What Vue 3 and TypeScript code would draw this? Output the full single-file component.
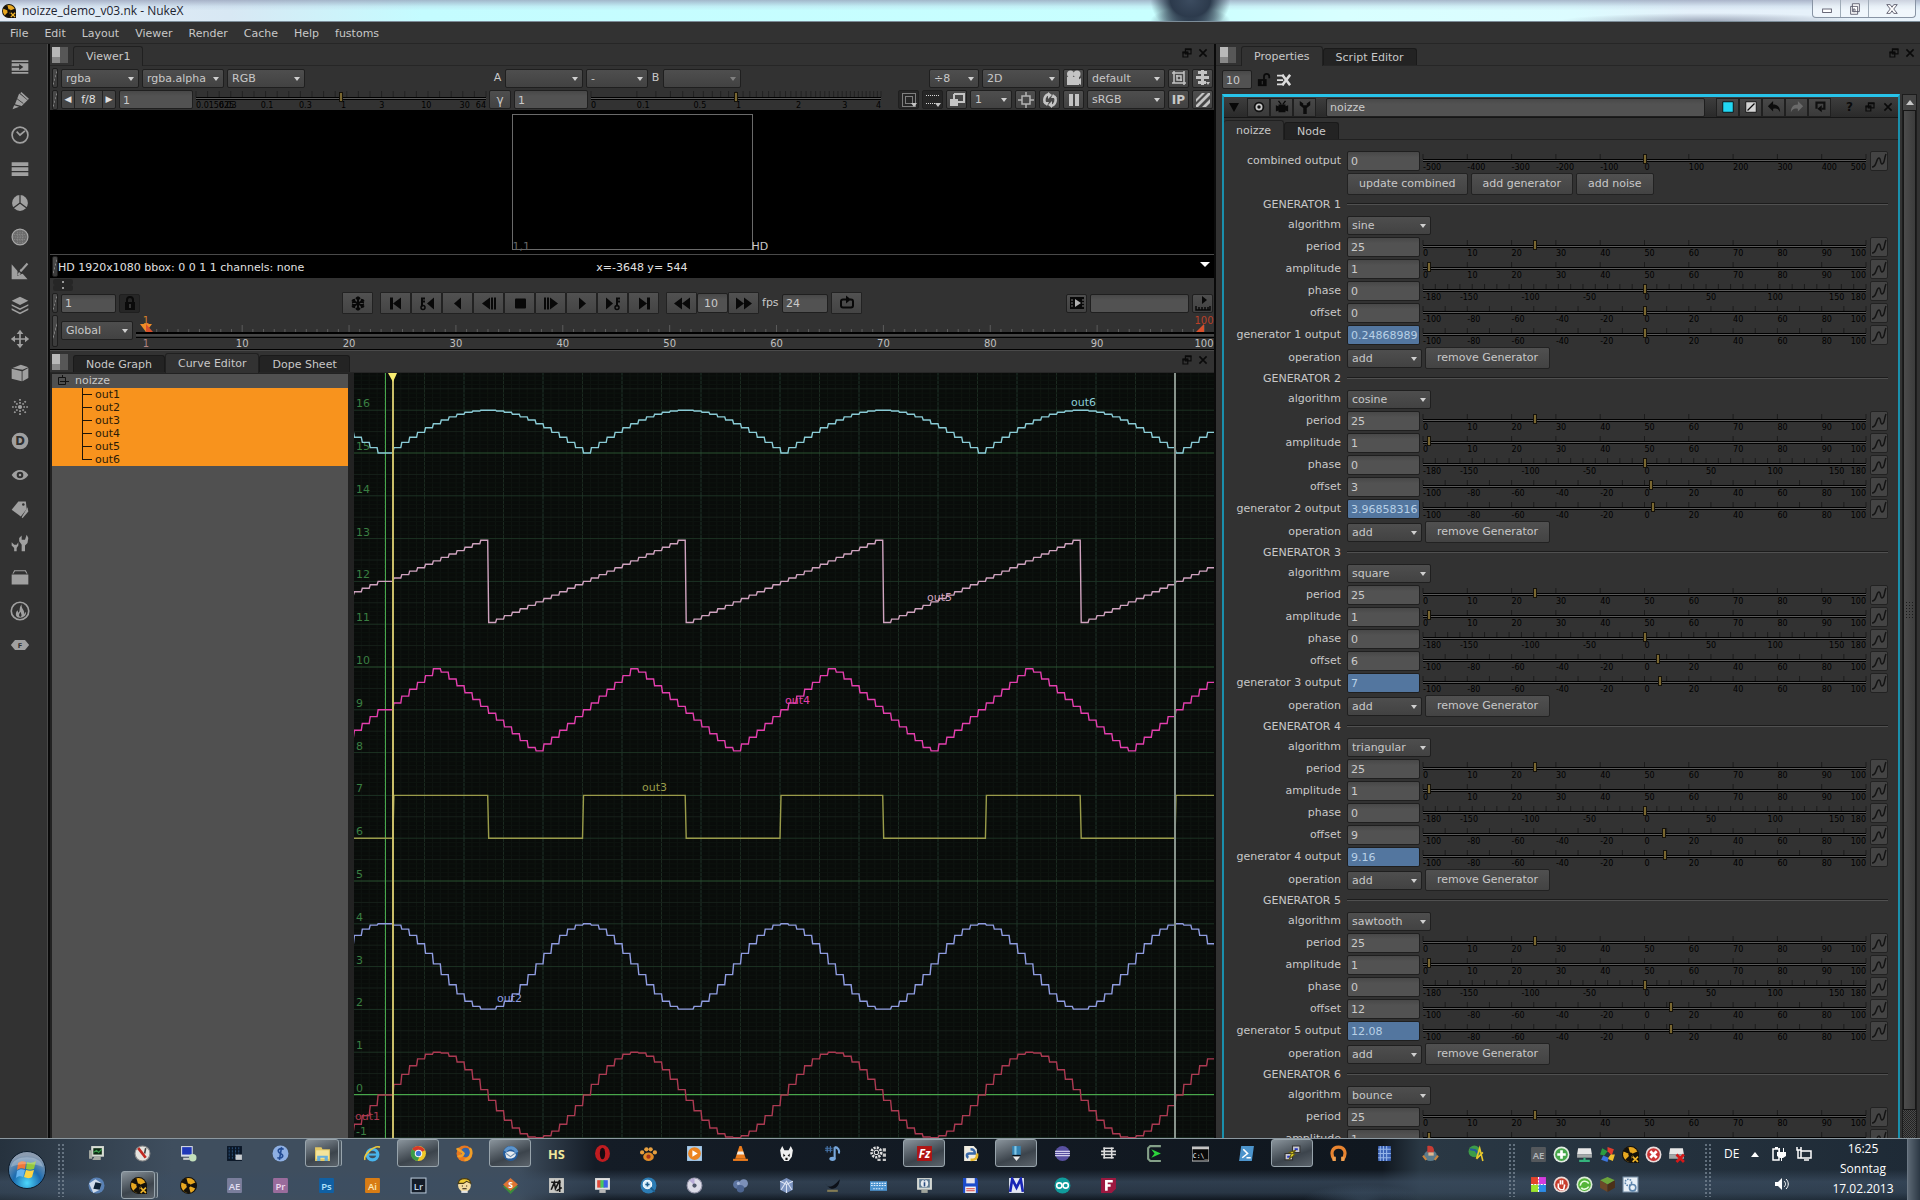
<script setup lang="ts">
interface Scale { min: number; max: number; labels: number[]; ticks: number[] }
interface Param { label: string; value: string; pos: number; scale: Scale; driven?: boolean }
interface Generator { id: number; algorithm: string; params: Param[]; open?: boolean }
interface Mark { at: number; text: string }
interface TaskItem { icon: string; state?: 'open' | 'stack' }

const range = (from: number, to: number, step: number): number[] => {
  const out: number[] = []
  for (let v = from; v <= to; v += step) out.push(v)
  return out
}

/* ---------- menus, tool strip ---------- */
const menus = ['File', 'Edit', 'Layout', 'Viewer', 'Render', 'Cache', 'Help', 'fustoms']

const toolIcons: Record<string, string> = {
  Image: '<path d="M2 4h20v2H2zM2 18h20v2H2zM2 7.500h20v9H2z"/><path d="M2 11h9V8.500l5 3.500-5 3.500V13H2z" fill="#303030"/>',
  Draw: '<path d="M11 3l10 8-7 7-8-2zM5 17l6 2-8 3z"/><path d="M13 2l9 8" stroke="#a0a0a0" stroke-width="2"/><path d="M8 9l8 6" stroke="#303030"/>',
  Time: '<circle cx="12" cy="12" r="9.500" fill="none" stroke="#a0a0a0" stroke-width="2"/><path d="M8 8l4 4 6-5" fill="none" stroke="#a0a0a0" stroke-width="2"/>',
  Channel: '<path d="M2 4h20v4.500H2zM2 10h20v4.500H2zM2 16h20v4.500H2z"/>',
  Color: '<circle cx="12" cy="12" r="9.500"/><path d="M12 12V2M12 12l-8 6M12 12l8 6" stroke="#303030" stroke-width="1.500"/>',
  Filter: '<circle cx="12" cy="12" r="9.500" fill="#6c6c6c" stroke="#a8a8a8" stroke-width="1.500"/><path d="M5 9h14M4 12h16M5 15h14M9 4v16M12 4v16M15 4v16" stroke="#8e8e8e" stroke-dasharray="1 1"/>',
  Keyer: '<path d="M2 4l7 8v6l6-3 6 7H2z"/><path d="M21 3l-8 9M14 10l-4 7" stroke="#a0a0a0" stroke-width="2.500"/><path d="M10 12l5 3" stroke="#303030" stroke-width="1.500"/>',
  Merge: '<path d="M12 2l10 5-10 5L2 7z"/><path d="M2 11l10 5 10-5v2l-10 5-10-5zM2 16l10 5 10-5v2l-10 5-10-5z"/>',
  Transform: '<path d="M12 1l4 5h-3v5h5V8l5 4-5 4v-3h-5v5h3l-4 5-4-5h3v-5H6v3l-5-4 5-4v3h5V6H8z"/>',
  '3D': '<path d="M13 2l9 3-7 3-12-2zM2 7l12 3v12L2 19zM15 10l7-4v12l-7 4z"/>',
  Particles: '<circle cx="12" cy="12" r="2.500"/><g stroke="#a0a0a0" stroke-width="2" stroke-dasharray="2 1.500"><path d="M12 8V2M12 16v6M8 12H2M16 12h6M9 9L5 5M15 15l4 4M15 9l4-4M9 15l-4 4"/></g>',
  Deep: '<circle cx="12" cy="12" r="10"/><text x="12" y="17" text-anchor="middle" font-family="DejaVu Sans, sans-serif" font-weight="700" font-size="14" fill="#303030">D</text>',
  Views: '<path d="M2 12c5-8 15-8 20 0-5 8-15 8-20 0z"/><circle cx="12" cy="12" r="4" fill="#303030"/><circle cx="12" cy="12" r="1.500"/>',
  MetaData: '<path d="M10 3h9l1 9-7 9-11-8z"/><path d="M21 10l1 5-7 8-1-1z"/><circle cx="16" cy="6.500" r="1.500" fill="#303030"/>',
  ToolSets: '<path d="M14 22v-8l-3-4V6l3-3v5h4l2-6 2 4-1 6-3 3v7zM5 22v-4l-3-3v-4l3 3h3l2-3v4l-2 3v4z"/>',
  Other: '<path d="M2 9h20v12H2zM5 4h14l2 4h-1l-2-3H6L4 8H3z"/>',
  FurnaceCore: '<circle cx="12" cy="12" r="10.500" fill="none" stroke="#a0a0a0" stroke-width="2"/><path d="M12 20c-6 0-6-6-3-9l1 3c3-2 0-5 4-10-1 5 4 7 3 12l2-3c1 4-2 7-7 7z"/><path d="M12 19c-2-1-1-4 1-6 0 3 2 4 0 6z" fill="#303030"/>',
  Furnace: '<path d="M6 6h12l5 6-5 6H6l-5-6z"/><text x="12" y="15" text-anchor="middle" font-family="DejaVu Sans, sans-serif" font-weight="700" font-size="8" fill="#303030">F</text>',
}

/* ---------- viewer ---------- */
const ui: Record<string, string> = {
  camera: '<circle cx="4.500" cy="4" r="3.500"/><circle cx="11" cy="4" r="3.500"/><path d="M1 7h12v8H1zM12 10l3-2v7l-3-2z"/>',
  crop: '<path d="M3 1v12h12M1 3h12v12M6 5v5h5M5 6h5v5M1 13h3M13 1v3" fill="none" stroke="#c4c4c4" stroke-width="1.500"/>',
  layout: '<path d="M3 1h9v3H3zM1 6h13v3H1zM3 11h8v3H3zM11 12h4l-2 3zM6 0h3v15H6z"/>',
  roi: '<path d="M1.500 1.500h13v13h-13zM4.500 4.500h7v7h-7z" fill="none" stroke="#d8d8d8" stroke-dasharray="1 1"/><path d="M10 11h6l-3 4z"/>',
  proxy: '<path d="M1 3.500h13M1 11.500h10" fill="none" stroke="#d8d8d8" stroke-dasharray="1 1"/><path d="M10 11h6l-3 4z"/>',
  compare: '<path d="M5 2h10v8H9M5 2v5" fill="none" stroke="#c4c4c4" stroke-width="2"/><path d="M1 7h8v7H1z"/>',
  target: '<path d="M4 4h8v8H4zM8 0v4M8 12v4M0 8h4M12 8h4" fill="none" stroke="#b4b4b4" stroke-width="1.500"/>',
  refresh: '<path d="M7 2a6 6 0 0 0-3 10M9 14a6 6 0 0 0 3-10" fill="none" stroke="#c4c4c4" stroke-width="2.500"/><path d="M6 0l4 3-4 4zM10 9v7l-4-3zM1 10l6 0-2 4zM9 6h6l-4-4z"/>',
  pause: '<path d="M3 2h4v12H3zM9 2h4v12H9z"/>',
  stripes: '<path d="M1 7l6-6h3L1 10zM1 13L13 1h2v2L3 15H1zM7 15l8-8v4l-4 4z"/>',
  popout: '<path d="M5.500 2.500h7v6h-7zM2.500 6.500h6v6h-6z" fill="#333" stroke="#0a0a0a" stroke-width="1.500"/><path d="M5 3h8M2 7h7" stroke="#0a0a0a" stroke-width="2"/>',
  close: '<path d="M3 3l9 9M12 3l-9 9" stroke="#0a0a0a" stroke-width="2"/>',
  lock: '<path d="M5 7V5a3 3 0 0 1 6 0v2" fill="none" stroke="#0a0a0a" stroke-width="2"/><path d="M3 7h10v8H3z" fill="#0a0a0a"/><path d="M8 9v4" stroke="#444" stroke-width="1.500"/>',
  unlock: '<path d="M8 7V4a3 3 0 0 1 6 0v2" fill="none" stroke="#0a0a0a" stroke-width="2"/><path d="M1 7h10v8H1z" fill="#0a0a0a"/><path d="M6 9v4" stroke="#444"/>',
  clear: '<path d="M0 2h8v2H0zM0 7h7v2H0zM0 12h8v2H0z"/><path d="M6 2l9 12M15 2L6 14" stroke="#dcdcdc" stroke-width="3"/>',
  snow: '<g fill="none" stroke="#080808" stroke-width="2"><path d="M8 1v14M2 4.500l12 7M14 4.500l-12 7M6 2l2 2 2-2M6 14l2-2 2 2M2 7l2.500-1L4 3.500M14 9l-2.500 1 .5 2.500M14 7l-2.500-1 .5-2.500M2 9l2.500 1-.5 2.500"/></g>',
  first: '<path d="M2 2h3v12H2zM13 2v12L5 8z"/>',
  prevkey: '<path d="M15 2v12L8 8z"/><path d="M3 2v9M3 3h3M3 6h3" stroke="#080808" stroke-width="2"/><circle cx="4" cy="12" r="2" fill="none" stroke="#080808" stroke-width="1.500"/>',
  back: '<path d="M11 2v12L4 8z"/>',
  stepback: '<path d="M9 2v12L1 8zM10 2h2v12h-2zM13 2h2v12h-2z"/>',
  stop: '<rect x="3" y="3" width="11" height="10" rx="1"/>',
  stepfwd: '<path d="M7 2v12l8-6zM4 2h2v12H4zM1 2h2v12H1z"/>',
  play: '<path d="M5 2v12l7-6z"/>',
  nextkey: '<path d="M1 2v12l7-6z"/><path d="M12 2v9M12 3h3M12 6h3" stroke="#080808" stroke-width="2"/><circle cx="12" cy="12" r="2" fill="none" stroke="#080808" stroke-width="1.500"/>',
  last: '<path d="M11 2h3v12h-3zM3 2v12l8-6z"/>',
  rew: '<path d="M8 2v12L0 8zM16 2v12L8 8z"/>',
  ffw: '<path d="M0 2v12l8-6zM8 2v12l8-6z"/>',
  loop: '<path d="M7 4H4a2 2 0 0 0-2 2v4a2 2 0 0 0 2 2h8a2 2 0 0 0 2-2V6a2 2 0 0 0-2-2h-1" fill="none" stroke="#080808" stroke-width="2"/><path d="M7 0v8l5-4z"/>',
  flip: '<path d="M1 2h14v12H1z"/><path d="M6 4v8l6-4z" fill="#b0b0b0"/><path d="M3 4v8M14 4v8" stroke="#777" stroke-dasharray="2 1"/>',
  render: '<path d="M7 1v8l5-4z"/><path d="M1 11v4h14v-4M4 12v3M7 12v3M10 12v3M13 12v3" fill="none" stroke="#080808" stroke-width="1.500"/>',
  eye: '<circle cx="8" cy="8" r="6" fill="#111"/><circle cx="8" cy="8" r="4" fill="#c8c8c8"/><circle cx="8" cy="8" r="2" fill="#111"/>',
  node: '<path d="M1 6l3 1V5h8v2l3-1v7l-3-1v2H4v-2l-3 1z" fill="#0a0a0a"/><path d="M4 1l3 4M12 1L9 5" stroke="#0a0a0a" stroke-width="1.500"/>',
  wrench: '<path d="M6 16V9L2 6V1l4 3v2h4V4l4-3v5l-4 3v7z"/>',
  cyan: '<path d="M2 2h12v12H2z" fill="#22d8f4" stroke="#0a0a0a"/>',
  glcol: '<path d="M2 2h12v12H2z" fill="#d4d4d4" stroke="#0a0a0a"/><path d="M4 12l8-8" stroke="#0a0a0a" stroke-width="1.500"/>',
  undo: '<path d="M1 7l6-6v4c6 0 8 4 8 9-2-4-4-5-8-4v3z"/>',
  redo: '<path d="M15 7L9 1v4c-6 0-8 4-8 9 2-4 4-5 8-4v3z" fill="#6a6a6a"/>',
  revert: '<path d="M4 10V3h9v7h-3" fill="none" stroke="#101010" stroke-width="2.500"/><path d="M10 6v8l-5-4z"/>',
  curve: '<path d="M1 14c5 0 4-9 7-9 2 0 1 6 3 6 3 0 2-6 4-10" fill="none" stroke="#141414" stroke-width="1.500"/>',
}

const play = ['first', 'prevkey', 'back', 'stepback', 'stop', 'stepfwd', 'play', 'nextkey', 'last']

const gainMarks: Mark[] = [0.015625, 0.03, 0.1, 0.3, 1, 3, 10, 30, 64]
  .map(v => ({ at: (Math.log2(v) + 6) / 12 * 100, text: String(v) }))
const gainTicks = range(0, 100, 4)
const gammaMarks: Mark[] = [0, 0.1, 0.5, 1, 2, 3, 4].map(v => ({ at: Math.sqrt(v / 4) * 100, text: String(v) }))
const gammaTicks = range(0, 40, 1).map(v => Math.sqrt(v / 40) * 100)

const frameAt = (f: number): string => ((f - 1) / 99 * 100).toFixed(3) + '%'
const frames = range(1, 100, 1)
const frameLabels = [1, ...range(10, 100, 10)]

/* ---------- curve editor ---------- */
const FRAME = 7.9
const UNIT = 42.8
const px = (f: number): number => 31 + f * FRAME
const py = (v: number): number => 722 - v * UNIT

const stepped = (fn: (t: number) => number): string => {
  let d = ''
  for (let f = -5; f < 130; f++) {
    const t = f < 0 ? f + 1 : f
    const y = py(fn(t)).toFixed(1)
    const x = px(f)
    d += `${d ? 'L' : 'M'}${(x + 1).toFixed(1)} ${y}L${px(f + 1).toFixed(1)} ${y}`
  }
  return d
}
const squareHigh = (t: number): boolean =>
  (t >= 1 && t < 13) || (t >= 25 && t < 38) || (t >= 50 && t < 63) || (t >= 76 && t < 88) || t >= 100
const curves = [
  { name: 'out1', color: '#ac3a52', x: 1, y: 747, d: stepped(t => Math.sin(2 * Math.PI * t / 25)) },
  { name: 'out2', color: '#8f9ce0', x: 143, y: 629, d: stepped(t => 3 + Math.cos(2 * Math.PI * t / 25)) },
  { name: 'out3', color: '#9a9c4a', x: 288, y: 418, d: stepped(t => (squareHigh(t) ? 7 : 6)) },
  { name: 'out4', color: '#e43fae', x: 431, y: 331, d: stepped(t => 9 + Math.asin(Math.sin(2 * Math.PI * t / 25)) * 2 / Math.PI) },
  { name: 'out5', color: '#cfa3bf', x: 573, y: 228, d: stepped(t => 12 + 2 * (t / 25 - Math.floor(0.5 + t / 25))) },
  { name: 'out6', color: '#8accd6', x: 717, y: 33, d: stepped(t => 15 + Math.abs(Math.sin(Math.PI * t / 25))) },
]
const gridX = range(-3, 130, 1).map(f => ({ x: px(f), c: f % 10 === 0 ? '#21352a' : f % 5 === 0 ? '#1b2a20' : '#101511' }))
const gridY = range(-10, 170, 1).map(k => ({
  y: py(k / 10),
  c: k % 50 === 0 ? '#2a5230' : k % 10 === 0 ? '#1d3324' : k % 5 === 0 ? '#17211a' : '#0d130f',
}))
const gridLabels = range(-1, 16, 1)

/* ---------- properties ---------- */
const pct: Scale = { min: 0, max: 100, labels: range(0, 100, 10), ticks: range(0, 100, 10) }
const hundred: Scale = { min: -100, max: 100, labels: range(-100, 100, 20), ticks: range(-100, 100, 10) }
const degrees: Scale = { min: -180, max: 180, labels: [-180, -150, -100, -50, 0, 50, 100, 150, 180], ticks: range(-180, 180, 10) }
const wide: Scale = { min: -500, max: 500, labels: range(-500, 500, 100), ticks: range(-500, 500, 100) }
const place = (s: Scale, v: number): string => ((v - s.min) / (s.max - s.min) * 100).toFixed(2) + '%'

const combined: Param = { label: 'combined output', value: '0', pos: 0, scale: wide }
const leading = (offset: number): Param[] => [
  { label: 'period', value: '25', pos: 25, scale: pct },
  { label: 'amplitude', value: '1', pos: 1, scale: pct },
  { label: 'phase', value: '0', pos: 0, scale: degrees },
  { label: 'offset', value: String(offset), pos: offset, scale: hundred },
]
const make = (id: number, algorithm: string, output: string): Generator => ({
  id,
  algorithm,
  params: [
    ...leading((id - 1) * 3),
    { label: `generator ${id} output`, value: output, pos: Number(output), scale: hundred, driven: true },
  ],
})
const generators: Generator[] = [
  make(1, 'sine', '0.24868989'),
  make(2, 'cosine', '3.96858316'),
  make(3, 'square', '7'),
  make(4, 'triangular', '9.16'),
  make(5, 'sawtooth', '12.08'),
  { id: 6, algorithm: 'bounce', params: leading(15).slice(0, 2), open: true },
]

/* ---------- task bar ---------- */
const tile = (bg: string, fg: string, t: string): string =>
  `<rect x="1" y="1" width="14" height="14" rx="1" fill="${bg}"/><text x="8" y="12" text-anchor="middle" font-family="Open Sans, sans-serif" font-weight="600" font-size="9" fill="${fg}">${t}</text>`
const nuke = '<circle cx="8" cy="8" r="8" fill="#15110a"/><circle cx="8" cy="8" r="7" fill="#e8a820"/><path d="M8 8L1 5a7 7 0 0 1 5-4zM8 8l7-3a7 7 0 0 1 0 6zM8 8l2 7a7 7 0 0 1-7-2z" fill="#15110a"/><circle cx="8" cy="8" r="2" fill="#15110a"/>'
const app: Record<string, string> = {
  nuke,
  nukex: nuke + '<path d="M9 9h7v7H9z" fill="#15110a"/><path d="M10 10l5 5M15 10l-5 5" stroke="#f0b428" stroke-width="1.500"/>',
  monitor: '<path d="M3 1h12v10H3z" fill="#d8dcd4"/><path d="M5 3h8v6H5z" fill="#0d2c14"/><path d="M5 7l3-2 2 2 3-3" stroke="#3c9a4c" fill="none"/><path d="M1 5h3v8H1zM6 11h6v3H4z" fill="#a8aca4"/>',
  gauge: '<circle cx="8" cy="8" r="7" fill="#e4e4e0" stroke="#8c8c8c"/><path d="M4 3l7 9" stroke="#c02820" stroke-width="2.500"/><path d="M11 3l-1 5" stroke="#444" stroke-width="1.500"/>',
  remote: '<path d="M1 1h11v10H1z" fill="#d8dce8"/><path d="M2 2h9v7H2z" fill="#2038b8"/><path d="M3 12h6v2H3z" fill="#ccc"/><circle cx="12" cy="12" r="3.500" fill="#c4e0bc"/>',
  matrix: '<path d="M1 1h14v14H1z" fill="#0a1626"/><path d="M3 2v12M6 2v12M9 2v12M12 2v12" stroke="#284c74" stroke-dasharray="2 1"/><path d="M9 9h6v5H9z" fill="#c8ccd0"/>',
  swirl: '<circle cx="8" cy="8" r="7.500" fill="#8eb0e4"/><path d="M11 4c-5-2-7 2-3 4s2 5-3 4M9 2l-2 12" fill="none" stroke="#234c94" stroke-width="1.500"/>',
  folder: '<path d="M1 2h6l1 2h7v11H1z" fill="#e4c864"/><path d="M2 5h12v8H2z" fill="#f4e49c"/><path d="M3 10h10v5h-3v-3H6v3H3z" fill="#68b0dc"/>',
  ie: '<circle cx="8" cy="9" r="5" fill="none" stroke="#48b4ec" stroke-width="3"/><path d="M4 9h9" stroke="#48b4ec" stroke-width="2"/><path d="M1 14C-1 10 9 0 15 2" fill="none" stroke="#f0c838" stroke-width="1.500"/>',
  chrome: '<circle cx="8" cy="8" r="7" fill="#f0c828"/><path d="M8 8L2 4a7 7 0 0 1 12 1z" fill="#d83828"/><path d="M2 4a7 7 0 0 0 5 11l3-6z" fill="#3c9c48"/><circle cx="8" cy="8" r="3.500" fill="#f4f4f4"/><circle cx="8" cy="8" r="2.500" fill="#3c78d8"/>',
  firefox: '<circle cx="8" cy="8" r="7.500" fill="#e87820"/><circle cx="9" cy="7" r="4.500" fill="#3464a8"/><path d="M1 3c1 2 4 2 6 5-1 3-4 3-5 2M13 3c3 4 0 11-5 11" fill="none" stroke="#f0a028" stroke-width="2.500"/>',
  bird: '<circle cx="8" cy="8" r="7" fill="#245c9c"/><path d="M3 8c2-3 9-3 10 1 0 3-5 5-9 3z" fill="#e8ecf0"/><path d="M3 6c3-5 9-4 11 1" fill="none" stroke="#5c94cc" stroke-width="3"/><path d="M4 8l4 3 4-3" fill="none" stroke="#6c8cac"/>',
  hs: '<text x="8" y="13" text-anchor="middle" font-family="Open Sans, sans-serif" font-weight="700" font-size="12" fill="#f0e89c">HS</text>',
  opera: '<ellipse cx="8" cy="8" rx="7" ry="8" fill="#c01c20"/><ellipse cx="8" cy="8" rx="2.500" ry="5.500" fill="#180a10"/>',
  paw: '<ellipse cx="8" cy="11" rx="5" ry="4" fill="#e08c28"/><circle cx="2" cy="7" r="2" fill="#e8a040"/><circle cx="6" cy="4" r="2" fill="#e8a040"/><circle cx="10" cy="4" r="2" fill="#e8a040"/><circle cx="14" cy="7" r="2" fill="#e8a040"/><circle cx="8" cy="11" r="2" fill="#a83418"/>',
  wmp: '<path d="M1 1h14v14H1z" fill="#a8ccec"/><circle cx="8" cy="8" r="6" fill="#ec8420"/><path d="M6 5v6l5-3z" fill="#fff"/>',
  vlc: '<path d="M7 1h2l4 12H3z" fill="#ec7c1c"/><path d="M5.500 6h5l1 3h-7z" fill="#f0ece4"/><path d="M1 13h14v2H1z" fill="#ec7c1c"/>',
  foobar: '<path d="M4 1l2 4h4l2-4 2 4-1 6-3 4H6l-3-4-1-6z" fill="#f0f0f0"/><path d="M5 8l2 2-2 1zM11 8l-2 2 2 1zM7 12h2v2H7z" fill="#111"/>',
  csharp: '<path d="M10 2v11" stroke="#78a8dc" stroke-width="2"/><path d="M10 2c3 0 5 3 4 6" fill="none" stroke="#78a8dc" stroke-width="2"/><ellipse cx="8" cy="13" rx="3" ry="2" fill="#78a8dc"/><path d="M3 1v6M6 1v6M1 3h7M1 5h7" stroke="#4878b0"/>',
  gears: '<circle cx="6" cy="7" r="4.500" fill="none" stroke="#e0e0e0" stroke-width="2.500" stroke-dasharray="2 1"/><circle cx="6" cy="7" r="2" fill="none" stroke="#e0e0e0"/><path d="M12 3h3v3h-3zM12 8h3v3h-3zM12 13h3v2h-3zM7 13h3v2H7z" fill="#c8c8c8"/>',
  fz: '<path d="M1 1h14v14H1z" fill="#b01414"/><text x="8" y="12" text-anchor="middle" font-family="Open Sans, sans-serif" font-weight="700" font-style="italic" font-size="11" fill="#fff">Fz</text>',
  idle: '<path d="M2 1h9l3 3v11H2z" fill="#f0ece0"/><path d="M8 4c4 0 4 2 4 4H7c-3 0-3 3-1 4" fill="none" stroke="#3868a8" stroke-width="2.500"/><path d="M14 8c1 5-2 6-6 6" fill="none" stroke="#e8b82c" stroke-width="2.500"/>',
  pen: '<path d="M4 1h8v9H4z" fill="#3484b4"/><path d="M6 1h2v9H6z" fill="#84c8e8"/><path d="M4 10h8l-4 5z" fill="#e8e8e8"/><path d="M4 10h8" stroke="#081018" stroke-width="1.500"/>',
  eclipse: '<circle cx="8" cy="8" r="7" fill="#5850a0"/><path d="M1 6h14M1 8h14M1 10h14" stroke="#d0ccec"/>',
  lines: '<path d="M3 3h10M1 6h14M1 9h14M3 12h10M4 2v11M11 2v11" stroke="#dcdcdc" stroke-width="1.500"/>',
  cygwin: '<path d="M14 1H4L2 3v10l2 2h10" fill="none" stroke="#84a088" stroke-width="2"/><path d="M5 4l9 4-9 4 3-4z" fill="#2cd43c"/>',
  cmd: '<path d="M0 2h16v13H0z" fill="#080808" stroke="#c8c8c8"/><path d="M0 2h16v2H0z" fill="#c8c8c8"/><text x="8" y="12" text-anchor="middle" font-family="DejaVu Sans Mono, monospace" font-size="6" fill="#fff">C:\\_</text>',
  ps1: '<path d="M3 1h12l-2 14H1z" fill="#4c94cc"/><path d="M5 4l4 4-5 4M8 12h4" fill="none" stroke="#fff" stroke-width="1.500"/>',
  putty: '<path d="M8 1h7v6H8zM1 8h7v6H1z" fill="#c8c8d0" stroke="#333"/><path d="M10 3h3v2h-3zM3 10h3v2H3z" fill="#2838c0"/><path d="M11 5l-3 3 2 1-5 4 2-5-2-1z" fill="#f0e42c" stroke="#665c10"/>',
  headset: '<path d="M4 14C0 8 2 2 8 2s8 6 4 12" fill="none" stroke="#e88430" stroke-width="3"/><path d="M4 15v-4M12 15v-4" stroke="#f0a050" stroke-width="3"/>',
  bluegrid: '<path d="M2 1h12v14H2z" fill="#3c64b8"/><path d="M4 1v14M7 1v14M10 1v14M2 4h12M2 8h12M2 12h12" stroke="#94b4e8"/>',
  knight: '<ellipse cx="8" cy="10" rx="6" ry="5" fill="#5c7c8c"/><path d="M5 1c5-1 7 2 6 6H5z" fill="#c83c34"/><path d="M6 7h5v3H6z" fill="#e0b890"/><path d="M1 10l3 4M15 10l-3 4" stroke="#c8843c" stroke-width="2"/>',
  globe: '<circle cx="6" cy="6" r="5.500" fill="#3c9c48"/><path d="M2 4l5 1 3 4" stroke="#245c9c" stroke-width="2" fill="none"/><path d="M8 13l3-10 3 12M14 7l-6 6" stroke="#e8c82c" fill="none" stroke-width="1.500"/>',
  steam: '<circle cx="8" cy="8" r="7.500" fill="#5880b4"/><path d="M1 6l6-4 6 4-2 6-6 3z" fill="#d0dcec"/><path d="M7 5l6 1-2 6-6-1z" fill="#102438"/>',
  ae: tile('#7a7e9c', '#e0dcf0', 'AE'),
  pr: tile('#9a6c9c', '#f0dcf0', 'Pr'),
  ps: tile('#1060a4', '#b4e4fc', 'Ps'),
  ai: tile('#d87c14', '#fce8b4', 'Ai'),
  lr: '<rect x="1" y="1" width="14" height="14" fill="#141c28" stroke="#b4c4d4"/><text x="8" y="12" text-anchor="middle" font-family="Open Sans, sans-serif" font-weight="600" font-size="9" fill="#c0d8ec">Lr</text>',
  boy: '<circle cx="8" cy="8" r="6" fill="#f4dca0"/><path d="M2 6c1-6 11-6 12 0l-4-2-3 2z" fill="#f0cc34" stroke="#4c3c14"/><path d="M6 8v1M10 8v1M6 11h4" stroke="#221a0a"/><path d="M5 13h6v2H5z" fill="#e4e4e4"/>',
  sublime: '<path d="M8 3l7 6-7 7-7-7z" fill="#3c8c3c"/><path d="M8 1l7 6-7 6-7-6z" fill="#dc7434"/><text x="8" y="10" text-anchor="middle" font-family="Open Sans, sans-serif" font-weight="700" font-size="8" fill="#fff">S</text>',
  scribble: '<path d="M1 1h14v14H1z" fill="#c8c8c4"/><path d="M3 12l3-7 1 6 4-8v11M3 5h9M8 13l5-3" fill="none" stroke="#181818" stroke-width="1.500"/>',
  rgbmon: '<path d="M1 1h14v11H1z" fill="#e0e0e0"/><path d="M3 3h4v7H3z" fill="#e04c3c"/><path d="M6 3h4v7H6z" fill="#48c85c"/><path d="M9 3h4v7H9z" fill="#3c64e4"/><path d="M5 12h6v3H5z" fill="#b8b8b8"/>',
  zoom: '<circle cx="8" cy="8" r="7.500" fill="#2c7cb4"/><circle cx="7" cy="7" r="4" fill="#d8f0fc" stroke="#fff"/><path d="M5 7h4M7 5v4M10 10l4 4" stroke="#1c5c8c" stroke-width="1.500"/>',
  disc: '<circle cx="8" cy="8" r="7" fill="#dcdce8" stroke="#9898ac"/><path d="M8 8L3 3l5-2z" fill="#b8acd8"/><circle cx="8" cy="8" r="2" fill="#50586c"/>',
  blob: '<circle cx="5" cy="7" r="4" fill="#5c74a0"/><circle cx="11" cy="6" r="4" fill="#7c90b8"/><circle cx="8" cy="11" r="3.500" fill="#4c6490"/><circle cx="6" cy="6" r="1.500" fill="#a8b8d8"/>',
  vbox: '<path d="M8 1l6 3v8l-6 3-6-3V4z" fill="#7c94c0"/><path d="M2 4l6 3 6-3M8 7v8M3 12l5-8 5 8" fill="none" stroke="#dce4f4"/>',
  swallow: '<path d="M1 6c3 4 6 5 14-4-1 7-4 9-8 9-3-1-4-3-6-5z" fill="#0c1018"/><path d="M3 13h10" stroke="#847c54" stroke-width="2"/>',
  keyboard: '<path d="M0 4h16v9H0z" fill="#4c94d0"/><path d="M1 6h14M1 8h14M3 11h10" stroke="#e4f0fc" stroke-dasharray="1.500 1"/>',
  info: '<path d="M1 1h14v11H1z" fill="#d4d8d4"/><path d="M3 2h10v8H3z" fill="#5c7890"/><circle cx="8" cy="6" r="3.500" fill="#e8ecf0"/><path d="M8 3v1M8 5v4" stroke="#284c80" stroke-width="1.500"/><path d="M5 12h6v3H5z" fill="#a0a49c"/>',
  floppy: '<path d="M1 1h13l1 2v12H1z" fill="#1c4ccc"/><path d="M4 1h8v5H4z" fill="#e4e4ec"/><path d="M3 9h10v6H3z" fill="#f4f4f4"/><path d="M4 11h8M4 13h8" stroke="#d83c3c"/>',
  m: '<path d="M1 1h14v14H1z" fill="#e4e8f4"/><path d="M2 14L4 2l4 8 4-8 2 12" fill="none" stroke="#1824b4" stroke-width="2.500"/>',
  arduino: '<circle cx="8" cy="8" r="7.500" fill="#109c9c"/><circle cx="5" cy="8" r="2.500" fill="none" stroke="#fff" stroke-width="1.500"/><circle cx="11" cy="8" r="2.500" fill="none" stroke="#fff" stroke-width="1.500"/>',
  f: '<path d="M1 1h14v10l-4 4H1z" fill="#9c1840"/><path d="M6 13V4h6M6 8h4" fill="none" stroke="#fff" stroke-width="2.500"/>',
  aegrey: tile('#54585c', '#b4b8bc', 'AE'),
  plus: '<circle cx="8" cy="8" r="7.500" fill="#e4ece4"/><circle cx="8" cy="8" r="6" fill="#48a84c"/><path d="M8 4v8M4 8h8" stroke="#fff" stroke-width="2.500"/>',
  drive: '<path d="M2 2h12l1 6H1z" fill="#e8e8e8"/><path d="M1 8h14v3H1z" fill="#a4a8a8"/><path d="M8 11v3M3 14h10" stroke="#34b47c" stroke-width="2"/>',
  pinwheel: '<path d="M1 8l2-6 5 3-3 4z" fill="#2c9c40"/><path d="M8 1l6 2-2 6-4-4z" fill="#e03c2c"/><path d="M15 8l-2 6-5-2 3-4z" fill="#f0c02c"/><path d="M8 15l-6-2 2-4 5 2z" fill="#3c74dc"/>',
  cross: '<circle cx="8" cy="8" r="7.500" fill="#e8dcdc"/><circle cx="8" cy="8" r="6" fill="#cc3434"/><path d="M5 5l6 6M11 5l-6 6" stroke="#fff" stroke-width="2.500"/>',
  driveoff: '<path d="M2 2h12l1 6H1z" fill="#e8e8e8"/><path d="M1 8h14v4H1z" fill="#a4a8a8"/><path d="M8 8l7 7M15 8l-7 7" stroke="#d41818" stroke-width="2.500"/>',
  spectrum: '<path d="M1 1h7v7H1z" fill="#e4442c"/><path d="M8 1h7v7H8z" fill="#d43ce0"/><path d="M1 8h7v7H1z" fill="#9ce42c"/><path d="M8 8h7v7H8z" fill="#2c8ce8"/><path d="M8 1v14M1 8h14" stroke="#fff" stroke-dasharray="2 1"/>',
  hand: '<circle cx="8" cy="8" r="7.500" fill="#ecdcd8"/><circle cx="8" cy="8" r="6" fill="#c83c2c"/><path d="M5 7v4l2 2h3l1-5M7 4v4M9 4v4" fill="none" stroke="#fff" stroke-width="1.500"/>',
  green: '<circle cx="8" cy="8" r="7.500" fill="#dcecd8"/><circle cx="8" cy="8" r="6" fill="#54b438"/><path d="M4 9c1-5 6-5 8-2M12 10c-2 3-6 3-7 1" fill="none" stroke="#e8fce0" stroke-width="1.500"/>',
  block: '<path d="M8 1l7 3-7 4-7-4z" fill="#6ca43c"/><path d="M1 4l7 4v7l-7-4z" fill="#6c4828"/><path d="M15 4L8 8v7l7-4z" fill="#4c3018"/>',
  gearpage: '<path d="M1 1h14v14H1z" fill="#e8f0f8" stroke="#7c94ac"/><circle cx="6" cy="6" r="3" fill="none" stroke="#5c84ac" stroke-width="1.500" stroke-dasharray="1.500 1"/><circle cx="10" cy="11" r="3" fill="none" stroke="#5c84ac" stroke-width="1.500"/>',
}
const rowOne: TaskItem[] = [
  { icon: 'monitor' }, { icon: 'gauge' }, { icon: 'remote' }, { icon: 'matrix' }, { icon: 'swirl' },
  { icon: 'folder', state: 'stack' }, { icon: 'ie' }, { icon: 'chrome', state: 'open' }, { icon: 'firefox' },
  { icon: 'bird', state: 'open' }, { icon: 'hs' }, { icon: 'opera' }, { icon: 'paw' }, { icon: 'wmp' }, { icon: 'vlc' },
  { icon: 'foobar' }, { icon: 'csharp' }, { icon: 'gears' }, { icon: 'fz', state: 'open' }, { icon: 'idle' },
  { icon: 'pen', state: 'open' }, { icon: 'eclipse' }, { icon: 'lines' }, { icon: 'cygwin' }, { icon: 'cmd' },
  { icon: 'ps1' }, { icon: 'putty', state: 'open' }, { icon: 'headset' }, { icon: 'bluegrid' }, { icon: 'knight' }, { icon: 'globe' },
]
const rowTwo: TaskItem[] = [
  { icon: 'steam' }, { icon: 'nukex', state: 'stack' }, { icon: 'nuke' }, { icon: 'ae' }, { icon: 'pr' }, { icon: 'ps' },
  { icon: 'ai' }, { icon: 'lr' }, { icon: 'boy' }, { icon: 'sublime' }, { icon: 'scribble' }, { icon: 'rgbmon' },
  { icon: 'zoom' }, { icon: 'disc' }, { icon: 'blob' }, { icon: 'vbox' }, { icon: 'swallow' }, { icon: 'keyboard' },
  { icon: 'info' }, { icon: 'floppy' }, { icon: 'm' }, { icon: 'arduino' }, { icon: 'f' },
]
const trayOne = ['aegrey', 'plus', 'drive', 'pinwheel', 'nukex', 'cross', 'driveoff']
const trayTwo = ['spectrum', 'hand', 'green', 'block', 'gearpage']
</script>

<template>
  <div class="desktop">
    <header class="titlebar">
      <svg class="i14" viewBox="0 0 16 16" v-html="app.nukex"></svg>
      <span class="caption">noizze_demo_v03.nk - NukeX</span>
      <div class="winbtns">
        <button aria-label="Minimize"><svg viewBox="0 0 16 16"><rect x="3" y="8" width="10" height="4" fill="#fff" stroke="#556"/></svg></button>
        <button aria-label="Restore"><svg viewBox="0 0 16 16"><path d="M5 2h8v9H5zM3 5h8v9H3z" fill="#fff" stroke="#556"/><path d="M6 8h2v3H6z" fill="#fff" stroke="#556"/></svg></button>
        <button class="wide" aria-label="Close"><svg viewBox="0 0 16 16"><path d="M2 3h4l2 3 2-3h4l-4 5 4 5h-4l-2-3-2 3H2l4-5z" fill="#fff" stroke="#556"/></svg></button>
      </div>
    </header>

    <nav class="menubar">
      <button v-for="m in menus" :key="m">{{ m }}</button>
    </nav>

    <main class="workspace">
      <aside class="tools">
        <button v-for="(g, name) in toolIcons" :key="name" :aria-label="String(name)">
          <svg viewBox="0 0 24 24" fill="#a0a0a0" v-html="g"></svg>
        </button>
      </aside>

      <section class="center">
        <div class="tabs">
          <i class="pane"></i>
          <button class="tab on">Viewer1</button>
          <span class="fill"></span>
          <svg class="i12" viewBox="0 0 15 15" v-html="ui.popout"></svg>
          <svg class="i12" viewBox="0 0 15 15" v-html="ui.close"></svg>
        </div>

        <div class="bar first">
          <i class="grip"></i>
          <span class="dd w78"><select aria-label="Channels"><option>rgba</option></select></span>
          <span class="dd w82"><select aria-label="Alpha channel"><option>rgba.alpha</option></select></span>
          <span class="dd w78"><select aria-label="Display"><option>RGB</option></select></span>
          <span class="fill a"></span>
          <label class="in" for="ina">A</label>
          <span class="dd w78"><select id="ina"><option></option></select></span>
          <span class="dd w62"><select aria-label="Wipe"><option>-</option></select></span>
          <label class="in" for="inb">B</label>
          <span class="dd w78 off"><select id="inb" disabled><option></option></select></span>
          <span class="fill b"></span>
          <span class="dd w50"><select aria-label="Downrez"><option>÷8</option></select></span>
          <span class="dd w78"><select aria-label="View mode"><option>2D</option></select></span>
          <button class="ib" aria-label="Camera"><svg viewBox="0 0 16 16" v-html="ui.camera"></svg></button>
          <span class="dd w78"><select aria-label="Camera source"><option>default</option></select></span>
          <button class="ib" aria-label="Crop"><svg viewBox="0 0 16 16" v-html="ui.crop"></svg></button>
          <button class="ib" aria-label="Toolbar layout"><svg viewBox="0 0 16 16" v-html="ui.layout"></svg></button>
        </div>

        <div class="bar second">
          <i class="grip"></i>
          <span class="stop">
            <button aria-label="Stop down">◀</button><button class="f8">f/8</button><button aria-label="Stop up">▶</button>
          </span>
          <input class="txt w74" aria-label="Gain" value="1">
          <div class="slider gain">
            <svg>
              <line v-for="t in gainTicks" :key="t" :x1="t + '%'" :x2="t + '%'" y1="2" y2="8" stroke="#222"/>
              <rect y="8" width="100%" height="1"/><rect y="9" width="100%" height="1" fill="#5a5a5a"/><rect y="10" width="100%" height="1"/>
              <text v-for="m in gainMarks" :key="m.text" :x="m.at + '%'" y="19" :text-anchor="m.at > 99 ? 'end' : 'start'">{{ m.text }}</text>
            </svg>
            <input type="range" aria-label="Gain slider" min="-6" max="6" value="0">
          </div>
          <button class="ib gam">γ</button>
          <input class="txt w74" aria-label="Gamma" value="1">
          <div class="slider gain">
            <svg>
              <line v-for="t in gammaTicks" :key="t" :x1="t + '%'" :x2="t + '%'" y1="2" y2="8" stroke="#222"/>
              <rect y="8" width="100%" height="1"/><rect y="9" width="100%" height="1" fill="#5a5a5a"/><rect y="10" width="100%" height="1"/>
              <text v-for="m in gammaMarks" :key="m.text" :x="m.at + '%'" y="19" :text-anchor="m.at > 99 ? 'end' : 'start'">{{ m.text }}</text>
            </svg>
            <input type="range" aria-label="Gamma slider" min="0" max="100" value="50">
          </div>
          <span class="fill"></span>
          <button class="ib dk" aria-label="Region of interest"><svg viewBox="0 0 16 16" v-html="ui.roi"></svg></button>
          <button class="ib dk" aria-label="Proxy"><svg viewBox="0 0 16 16" v-html="ui.proxy"></svg></button>
          <button class="ib" aria-label="Compare"><svg viewBox="0 0 16 16" v-html="ui.compare"></svg></button>
          <span class="dd w42"><select aria-label="Proxy scale"><option>1</option></select></span>
          <button class="ib" aria-label="Format"><svg viewBox="0 0 16 16" v-html="ui.target"></svg></button>
          <button class="ib" aria-label="Refresh"><svg viewBox="0 0 16 16" v-html="ui.refresh"></svg></button>
          <button class="ib" aria-label="Pause"><svg viewBox="0 0 16 16" v-html="ui.pause"></svg></button>
          <span class="dd w78"><select aria-label="Viewer process"><option>sRGB</option></select></span>
          <button class="ib ip">IP</button>
          <button class="ib" aria-label="Zebra"><svg viewBox="0 0 16 16" v-html="ui.stripes"></svg></button>
        </div>

        <div class="viewer">
          <div class="format"><span class="origin">1,1</span><span class="name">HD</span></div>
        </div>
        <div class="info">
          <i class="grip"></i>
          <span>HD 1920x1080 bbox: 0 0 1 1 channels: none</span>
          <span class="xy">x=-3648 y= 544</span>
          <i class="down"></i>
        </div>
        <div class="nubs"><i></i><i></i></div>

        <div class="transport">
          <i class="grip"></i>
          <input class="txt w54" aria-label="Current frame" value="1">
          <button class="ib dk" aria-label="Lock range"><svg viewBox="0 0 16 16" v-html="ui.lock"></svg></button>
          <span class="fill ta"></span>
          <button class="pb" aria-label="Freeze"><svg viewBox="0 0 16 16" v-html="ui.snow"></svg></button>
          <div class="group">
            <button v-for="p in play" :key="p" class="pb" :aria-label="p"><svg viewBox="0 0 16 16" v-html="ui[p]"></svg></button>
          </div>
          <div class="group">
            <button class="pb" aria-label="Skip back"><svg viewBox="0 0 16 16" v-html="ui.rew"></svg></button>
            <input class="txt w32" aria-label="Frame increment" value="10">
            <button class="pb" aria-label="Skip forward"><svg viewBox="0 0 16 16" v-html="ui.ffw"></svg></button>
          </div>
          <label class="fps" for="fps">fps</label>
          <input id="fps" class="txt w46" value="24">
          <button class="pb" aria-label="Loop"><svg viewBox="0 0 16 16" v-html="ui.loop"></svg></button>
          <span class="fill tb"></span>
          <button class="ib" aria-label="Flipbook"><svg viewBox="0 0 16 16" v-html="ui.flip"></svg></button>
          <input class="txt w100" aria-label="Frame range">
          <button class="ib" aria-label="Render"><svg viewBox="0 0 16 16" v-html="ui.render"></svg></button>
        </div>

        <div class="timeline">
          <i class="grip"></i>
          <span class="dd w72"><select aria-label="Range"><option>Global</option></select></span>
          <svg class="ruler">
            <line v-for="f in frames" :key="f" :x1="frameAt(f)" :x2="frameAt(f)" :y1="f % 10 === 0 ? 10 : 14" y2="17" stroke="#5c5c5c"/>
            <rect x="-10" y="17" width="102%" height="2" fill="#000"/>
            <rect x="-10" y="19" width="102%" height="2" fill="#454545"/>
            <rect x="-10" y="22" width="102%" height="1" fill="#000"/>
            <text v-for="f in frameLabels" :key="f" :x="frameAt(f)" y="32" text-anchor="middle" :class="{ now: f === 1 }">{{ f }}</text>
            <path d="M-6 9H6L0 17z" fill="#f08c28"/><path d="M0 9v8h7z" fill="#d8502c"/>
            <text x="0" y="9" text-anchor="middle" class="or">1</text>
            <text x="100%" y="9" text-anchor="middle" class="rd">100</text>
            <svg x="100%" y="0" overflow="visible"><path d="M0 9v8h-8z" fill="#d8502c"/></svg>
          </svg>
        </div>

        <div class="tabs low">
          <i class="pane"></i>
          <button class="tab">Node Graph</button>
          <button class="tab on">Curve Editor</button>
          <button class="tab">Dope Sheet</button>
          <span class="fill"></span>
          <svg class="i12" viewBox="0 0 15 15" v-html="ui.popout"></svg>
          <svg class="i12" viewBox="0 0 15 15" v-html="ui.close"></svg>
        </div>

        <div class="editor">
          <div class="tree">
            <div class="root"><svg viewBox="0 0 20 13"><path d="M5.500 2.500h7v7h-7zM7 6.500h9M9.500 0v2" fill="none" stroke="#111"/></svg>noizze</div>
            <ul>
              <li v-for="(c, i) in curves" :key="c.name" :class="{ end: i === 5 }">{{ c.name }}</li>
            </ul>
          </div>
          <svg class="graph">
            <line v-for="(g, i) in gridX" :key="'x' + i" :x1="g.x" :x2="g.x" y1="0" y2="100%" :stroke="g.c"/>
            <line v-for="(g, i) in gridY" :key="'y' + i" :y1="g.y" :y2="g.y" x1="0" x2="100%" :stroke="g.c"/>
            <line x1="0" x2="100%" y1="721.500" y2="721.500" stroke="#48a84a"/>
            <line x1="31.500" x2="31.500" y1="0" y2="100%" stroke="#48a84a"/>
            <text v-for="v in gridLabels" :key="v" x="2" :y="py(v) - 3" fill="#3a7f42">{{ v }}</text>
            <path v-for="c in curves" :key="c.name" :d="c.d" fill="none" :stroke="c.color" stroke-width="1.400"/>
            <text v-for="c in curves" :key="'t' + c.name" :x="c.x" :y="c.y" :fill="c.color">{{ c.name }}</text>
            <rect x="38" y="0" width="2" height="100%" fill="#c9bd68"/>
            <path d="M34 0h9l-4 9z" fill="#f8ec70"/>
            <rect x="820" y="0" width="2" height="100%" fill="#88948c"/>
          </svg>
        </div>
      </section>

      <section class="right">
        <div class="tabs">
          <i class="pane"></i>
          <button class="tab on">Properties</button>
          <button class="tab">Script Editor</button>
          <span class="fill"></span>
          <svg class="i12" viewBox="0 0 15 15" v-html="ui.popout"></svg>
          <svg class="i12" viewBox="0 0 15 15" v-html="ui.close"></svg>
        </div>
        <div class="pbar">
          <input class="txt w30" aria-label="Maximum panels" value="10">
          <svg class="i14" viewBox="0 0 16 16" v-html="ui.unlock"></svg>
          <svg class="i14" viewBox="0 0 16 16" fill="#dcdcdc" v-html="ui.clear"></svg>
        </div>
        <div class="scroll">
          <div class="node">
            <div class="nhead">
              <i class="tri"></i>
              <div class="trio">
                <button v-for="n in ['eye', 'node', 'wrench']" :key="n" :aria-label="n"><svg viewBox="0 0 16 16" v-html="ui[n]"></svg></button>
              </div>
              <input class="txt fill" aria-label="Node name" value="noizze">
              <div class="trio">
                <button v-for="n in ['cyan', 'glcol', 'undo', 'redo', 'revert']" :key="n" :aria-label="n"><svg viewBox="0 0 16 16" v-html="ui[n]"></svg></button>
              </div>
              <b class="q">?</b>
              <svg class="i12" viewBox="0 0 15 15" v-html="ui.popout"></svg>
              <svg class="i12" viewBox="0 0 15 15" v-html="ui.close"></svg>
            </div>
            <div class="ntabs">
              <button class="tab on">noizze</button>
              <button class="tab">Node</button>
              <span class="fill"></span>
            </div>

            <div class="knobs">
              <div class="row">
                <label for="combined">{{ combined.label }}</label>
                <input id="combined" class="txt" :value="combined.value">
                <div class="slider">
                  <svg>
                    <line v-for="t in combined.scale.ticks" :key="t" :x1="place(combined.scale, t)" :x2="place(combined.scale, t)" y1="4" y2="9" stroke="#1c1c1c"/>
                    <rect y="9" width="100%" height="1"/><rect y="10" width="100%" height="1" fill="#5a5a5a"/><rect y="11" width="100%" height="1"/>
                    <text v-for="t in combined.scale.labels" :key="t" :x="place(combined.scale, t)" y="20" :text-anchor="t === combined.scale.max ? 'end' : 'start'">{{ t }}</text>
                  </svg>
                  <input type="range" aria-label="combined output slider" :min="combined.scale.min" :max="combined.scale.max" :value="combined.pos">
                </div>
                <button class="anim" aria-label="Animation"><svg viewBox="0 0 16 16" v-html="ui.curve"></svg></button>
              </div>
              <div class="row btns">
                <span class="lab"></span>
                <button class="btn">update combined</button>
                <button class="btn">add generator</button>
                <button class="btn">add noise</button>
              </div>

              <template v-for="g in generators" :key="g.id">
                <div class="row head"><span class="lab">GENERATOR {{ g.id }}</span><i class="rule"></i></div>
                <div class="row">
                  <label :for="'alg' + g.id">algorithm</label>
                  <span class="dd w84"><select :id="'alg' + g.id"><option>{{ g.algorithm }}</option></select></span>
                </div>
                <div v-for="(p, i) in g.params" :key="p.label" class="row">
                  <label :for="'k' + g.id + i">{{ p.label }}</label>
                  <input :id="'k' + g.id + i" class="txt" :class="{ driven: p.driven }" :value="p.value">
                  <div class="slider">
                    <svg>
                      <line v-for="t in p.scale.ticks" :key="t" :x1="place(p.scale, t)" :x2="place(p.scale, t)" y1="4" y2="9" stroke="#1c1c1c"/>
                      <rect y="9" width="100%" height="1"/><rect y="10" width="100%" height="1" fill="#5a5a5a"/><rect y="11" width="100%" height="1"/>
                      <text v-for="t in p.scale.labels" :key="t" :x="place(p.scale, t)" y="20" :text-anchor="t === p.scale.max ? 'end' : 'start'">{{ t }}</text>
                    </svg>
                    <input type="range" :aria-label="p.label + ' slider'" step="any" :min="p.scale.min" :max="p.scale.max" :value="p.pos">
                  </div>
                  <button class="anim" aria-label="Animation"><svg viewBox="0 0 16 16" v-html="ui.curve"></svg></button>
                </div>
                <div v-if="!g.open" class="row oper">
                  <label :for="'op' + g.id">operation</label>
                  <span class="dd w74"><select :id="'op' + g.id"><option>add</option></select></span>
                  <button class="btn">remove Generator</button>
                </div>
              </template>
            </div>
          </div>
          <div class="sbar"><i class="up"></i><div class="thumb"><i></i></div><div class="rest"></div></div>
        </div>
      </section>
    </main>

    <footer class="taskbar">
      <button class="orb" aria-label="Start">
        <svg viewBox="0 0 40 40">
          <defs>
            <radialGradient id="orb" cx="50%" cy="85%" r="75%"><stop offset="0" stop-color="#4cd8fc"/><stop offset=".5" stop-color="#1c6cb0"/><stop offset="1" stop-color="#8c9cb0"/></radialGradient>
          </defs>
          <circle cx="20" cy="20" r="18.500" fill="url(#orb)" stroke="#0c1c2c"/>
          <path d="M11 13c3-2 5-2 8-1l-1 7c-3-1-5-1-8 1z" fill="#f07838"/>
          <path d="M20 12c3 1 6 1 9-1l-2 8c-3 1-5 1-8 0z" fill="#94c83c"/>
          <path d="M10 21c3-2 5-2 8-1l-2 7c-2-1-5-1-7 1z" fill="#64b4f0"/>
          <path d="M19 20c3 1 5 1 8 0l-2 7c-3 2-5 1-8 0z" fill="#fcd444"/>
          <path d="M4 17C6 4 34 4 36 17 28 13 12 13 4 17z" fill="#fff" opacity=".25"/>
        </svg>
      </button>
      <i class="dots"></i>
      <div class="apps">
        <div class="arow">
          <button v-for="(t, i) in rowOne" :key="i" :class="t.state" :aria-label="t.icon"><svg viewBox="0 0 16 16" v-html="app[t.icon]"></svg></button>
        </div>
        <div class="arow">
          <button v-for="(t, i) in rowTwo" :key="i" :class="t.state" :aria-label="t.icon"><svg viewBox="0 0 16 16" v-html="app[t.icon]"></svg></button>
        </div>
      </div>
      <i class="dots"></i>
      <div class="tray">
        <div><svg v-for="t in trayOne" :key="t" viewBox="0 0 16 16" v-html="app[t]"></svg></div>
        <div><svg v-for="t in trayTwo" :key="t" viewBox="0 0 16 16" v-html="app[t]"></svg></div>
      </div>
      <i class="dots"></i>
      <div class="sys">
        <div>
          <span class="lang">DE</span><i class="chev"></i>
          <svg viewBox="0 0 16 16"><path d="M2 3h6v11H2z" fill="none" stroke="#fff" stroke-width="1.500"/><path d="M4 1h3v2H4zM6 6h9v4l-3 2H9l-3-2zM8 2h1v4H8zM12 2h1v4h-1zM10 11h1v4h-1z" fill="#fff"/></svg>
          <svg viewBox="0 0 16 16"><path d="M5 5h10v7H5zM8 14h5M2 4v8h3M1 1v3h4V1" fill="none" stroke="#fff" stroke-width="1.500"/></svg>
        </div>
        <div>
          <svg class="vol" viewBox="0 0 16 16"><path d="M1 6h3l4-4v12l-4-4H1z" fill="#fff"/><path d="M10 5c2 2 2 4 0 6M12 3c3 3 3 7 0 10" fill="none" stroke="#fff"/></svg>
        </div>
      </div>
      <div class="clock"><span>16:25</span><span>Sonntag</span><span>17.02.2013</span></div>
      <button class="show" aria-label="Show desktop"></button>
    </footer>
  </div>
</template>

<style>
body { background: #323232; overflow: hidden; }
</style>

<style scoped>
* { box-sizing: border-box; }
button, input, select { font: inherit; color: inherit; margin: 0; padding: 0; border: 0; background: none; border-radius: 0; outline: 0; }
i { display: block; flex: none; }
svg { display: block; flex: none; }

.desktop { height: 100vh; display: grid; grid-template-rows: 22px 22px minmax(0, 1fr) 62px; font: 11px/14px "DejaVu Sans", Verdana, sans-serif; color: #c8c8c8; background: #323232; }

.titlebar { display: flex; align-items: center; gap: 6px; padding-left: 2px; color: #1c2430; font: 12px/18px "Open Sans", sans-serif; border-bottom: 1px solid #7c8c98;
  background:
    radial-gradient(ellipse 40px 34px at 62% 0, #3c4c60 0, #2c3a4c 50%, transparent 100%),
    radial-gradient(ellipse 40px 14px at 62% 100%, #2c3c50 0, transparent 100%),
    radial-gradient(ellipse 150px 8px at 89% 100%, rgba(90, 100, 125, .5) 0, transparent 100%),
    linear-gradient(180deg, rgba(150, 160, 185, .75) 0, rgba(180, 200, 220, .3) 30%, transparent 50%),
    linear-gradient(90deg, #e4ecf6 0, #d8e8f4 12%, #c4fcff 22%, #c8ffff 60%, #d8ffff 70%, #dcfcff 82%, #e4f0fa 88%, #e8f2fa 100%); }
.caption { flex: 1; }
.winbtns { display: flex; align-self: flex-start; height: 18px; margin-right: 4px; border: 1px solid #8894a4; border-top: 0; border-radius: 0 0 4px 4px; background: rgba(255, 255, 255, .4); }
.winbtns button { width: 28px; display: grid; place-items: center; border-right: 1px solid #a0acb8; }
.winbtns .wide { width: 46px; border: 0; }
.winbtns svg { width: 14px; height: 14px; }

.menubar { display: flex; align-items: center; padding: 3px 0 0 10px; gap: 16px; border-bottom: 1px solid #262626; background: #323232; }

.workspace { display: grid; grid-template-columns: 50px minmax(0, 1164fr) minmax(0, 706fr); min-height: 0; overflow: hidden; }
.tools { padding-top: 6px; border-right: 2px solid #0a0a0a; box-shadow: inset -1px 0 #4a4a4a; display: flex; flex-direction: column; }
.tools button { height: 34px; width: 40px; display: grid; place-items: center; }
.tools svg { width: 20px; height: 20px; }

.center, .right { display: flex; flex-direction: column; min-width: 0; min-height: 0; overflow: hidden; }
.fill { flex: 1; min-width: 0; }

.tabs { display: flex; align-items: flex-end; height: 22px; flex: none; border-bottom: 1px solid #262626; padding-right: 1px; }
.tabs > .i12 { align-self: center; margin-right: 4px; margin-bottom: 3px; }
.i12 { width: 12px; height: 12px; }
.i14 { width: 14px; height: 14px; }
.pane { width: 16px; height: 16px; margin: 0 5px 2px 2px; background: linear-gradient(90deg, transparent 50%, #575757 50%), linear-gradient(#b8b8b8 60%, #888 60%); }
.tab { height: 17px; padding: 1px 12px 0; background: #232323; border: 1px solid #1a1a1a; border-bottom: 0; border-radius: 3px 3px 0 0; }
.tab.on { height: 20px; padding-top: 0; background: #323232; border-color: #202020; margin-bottom: -1px; }

.bar { display: flex; align-items: center; height: 21px; gap: 3px; flex: none; padding-right: 1px; }
.bar.first { height: 23px; padding-top: 1px; }
.grip { width: 6px; height: 20px; margin: 0 0 0 2px; border: 1px solid #1e1e1e; border-radius: 2px; background: linear-gradient(105deg, #484848 45%, #8a8a8a 50%, #3c3c3c 55%); }
.a { flex: 187 1 0; }
.b { flex: 187 1 0; }
.in { width: 9px; text-align: center; }

.dd { position: relative; display: flex; height: 19px; flex: none; border: 1px solid #1f1f1f; border-radius: 2px; background: linear-gradient(#4e4e4e, #424242); }
.dd select { appearance: none; width: 100%; height: 17px; padding-left: 4px; line-height: 15px; opacity: 1; color: #c8c8c8; }
.dd::after { content: ""; position: absolute; right: 4px; top: 7px; border: 3px solid transparent; border-top: 4px solid #d0d0d0; border-bottom: 0; pointer-events: none; }
.dd.off::after { border-top-color: #808080; }
.w42 { width: 42px; } .w50 { width: 50px; } .w62 { width: 62px; } .w72 { width: 72px; } .w78 { width: 78px; }
.w82 { width: 82px; } .w84 { width: 84px; } .dd.w74 { width: 75px; }

.txt { height: 19px; flex: none; width: 73px; padding: 1px 0 0 3px; border: 1px solid #1f1f1f; border-radius: 2px; background: linear-gradient(#484848, #525252 30%); color: #cacaca; }
.txt.w74 { width: 74px; } .txt.w54 { width: 55px; } .txt.w32 { width: 31px; } .txt.w46 { width: 46px; } .txt.w100 { width: 99px; } .txt.w30 { width: 30px; }
.txt.fill { flex: 1; }
.txt.driven { background: #53769f; color: #b8d0e6; }

.ib { width: 21px; height: 19px; flex: none; display: grid; place-items: center; border: 1px solid #1f1f1f; border-radius: 2px; background: linear-gradient(#4e4e4e, #424242); }
.ib svg { width: 16px; height: 16px; fill: #c4c4c4; }
.ib.dk { background: #262626; }
.ip { font-weight: 700; font-size: 12px; }
.gam { font-size: 12px; width: 22px; }
.stop { display: flex; height: 19px; width: 55px; border: 1px solid #1f1f1f; border-radius: 2px; background: #454545; }
.stop button { width: 12px; font-size: 9px; line-height: 17px; color: #e0e0e0; }
.stop .f8 { width: 29px; font-size: 11px; border: 1px solid #222; border-width: 0 1px; }

.slider { position: relative; flex: 1; min-width: 0; height: 22px; }
.slider.gain { flex: 0 1 290px; height: 21px; }
.slider svg { width: 100%; height: 100%; overflow: visible; }
.slider text { font-size: 8px; fill: #000; }
.slider input { appearance: none; position: absolute; left: 0; top: 4px; width: 100%; height: 11px; margin: 0; background: none; }
.slider.gain input { top: 3px; }
.slider input::-webkit-slider-runnable-track { height: 11px; background: none; }
.slider input::-webkit-slider-thumb { appearance: none; width: 4px; height: 10px; border: 1px solid #15120a; background: #7a6730; border-radius: 0; }

.viewer { height: 144px; flex: none; background: #000; display: flex; justify-content: center; padding-top: 4px; }
.format { position: relative; width: 241px; height: 136px; border: 1px solid #6a6a6a; }
.origin { position: absolute; left: 0; bottom: -5px; color: #666; }
.name { position: absolute; left: 100%; bottom: -5px; color: #c8c8c8; }
.info { height: 24px; flex: none; background: #000; border-top: 1px solid #4a4a4a; display: flex; align-items: center; color: #e0e0e0; padding-top: 2px; }
.info .grip { height: 21px; width: 6px; margin-top: -2px; }
.xy { flex: 1; padding-left: 292px; }
.down { margin-right: 4px; border: 5px solid transparent; border-top-color: #fff; border-bottom: 0; margin-bottom: 6px; }
.nubs { height: 13px; flex: none; padding: 1px 0 0 3px; }
.nubs i { width: 20px; height: 6px; background: radial-gradient(circle at 50% 50%, #999 0, #999 1px, #262626 1px); border-radius: 2px; }

.transport { height: 24px; flex: none; display: flex; align-items: center; padding-right: 1px; gap: 3px; }
.transport .ib svg { fill: #080808; }
.ta { flex: 200 1 0; }
.tb { flex: 202 1 0; }
.group { display: flex; margin-left: 4px; }
.group .txt { height: 20px; align-self: center; padding-left: 6px; }
.pb { width: 31px; height: 22px; display: grid; place-items: center; border: 1px solid #222; border-radius: 1px; background: linear-gradient(#515151, #444); }
.pb svg { width: 16px; height: 17px; fill: #080808; }
.fps { width: 17px; }

.timeline { height: 35px; flex: none; display: flex; align-items: flex-start; border-bottom: 1px solid #000; box-shadow: 0 1px #4a4a4a; overflow: hidden; }
.timeline .grip { height: 32px; margin-right: 3px; }
.timeline .dd { margin: 6px 13px 0 0; }
.ruler { flex: 1; min-width: 0; height: 34px; margin-right: 10px; overflow: visible; }
.ruler text { font-size: 10px; fill: #c0c0c0; }
.ruler .or { fill: #d8802c; }
.ruler .rd { fill: #b84028; }
.ruler .now { fill: #b08484; }
.tabs.low { height: 23px; }

.editor { flex: 1; min-height: 0; display: flex; background: #222; }
.tree { flex: 296 1 0; min-width: 0; margin: 1px 0 0 2px; background: #505050; }
.root { height: 14px; display: flex; align-items: center; gap: 1px; }
.root svg { width: 22px; height: 13px; }
.tree ul { list-style: none; margin: 0; padding: 0; background: #f8931d; color: #2c1c08; }
.tree li { height: 13px; line-height: 14px; padding-left: 43px; position: relative; }
.tree li::before { content: ""; position: absolute; left: 30px; top: 0; bottom: 0; width: 1px; background: #1c1408; }
.tree li.end::before { bottom: 6px; }
.tree li::after { content: ""; position: absolute; left: 30px; top: 6px; width: 10px; height: 1px; background: #1c1408; }
.graph { flex: 860 1 0; min-width: 0; height: 100%; background: #090c0a; margin-left: 6px; }
.graph text { font-size: 11px; }

.right { border-left: 2px solid #0a0a0a; }
.right .tabs { padding: 0 0 0 2px; }
.right .pane { margin-right: 5px; }
.pbar { height: 27px; flex: none; display: flex; align-items: center; gap: 5px; padding-left: 6px; }
.pbar .i14 { margin-right: 1px; }
.scroll { flex: 1; min-height: 0; display: flex; padding: 1px 3px 0 6px; }
.node { flex: 1; min-width: 0; overflow: hidden; border: 2px solid #1a8fac; border-top: 3px solid #28c4ea; border-bottom: 0; }
.nhead { height: 21px; display: flex; align-items: center; padding: 0 4px 0 5px; background: linear-gradient(#3e3e3e, #2a2a2a); border-bottom: 1px solid #161616; }
.tri { border: 5px solid transparent; border-top: 9px solid #080808; border-bottom: 0; margin-right: 8px; }
.trio { display: flex; }
.trio button { width: 23px; height: 19px; display: grid; place-items: center; border: 1px solid #202020; background: linear-gradient(#484848, #3a3a3a); }
.trio svg { width: 14px; height: 14px; fill: #0c0c0c; }
.nhead .txt { margin: 0 11px 0 10px; }
.q { margin: 0 11px 0 15px; font-size: 12px; color: #0a0a0a; }
.nhead .i12 + .i12 { margin-left: 6px; }
.ntabs { display: flex; align-items: flex-end; height: 22px; border-bottom: 1px solid #202020; }
.ntabs .tab { padding: 1px 12px 0; }
.ntabs .tab.on { border-left: 0; height: 20px; }
.knobs { padding: 10px 10px 0 0; }
.row { display: flex; align-items: center; height: 22px; }
.row label, .lab { width: 117px; margin-right: 6px; text-align: right; flex: none; white-space: nowrap; }
.row .txt { height: 20px; margin-right: 3px; }
.row .slider { margin-right: 4px; }
.anim { width: 18px; height: 20px; flex: none; display: grid; place-items: center; border: 1px solid #222; border-radius: 2px; background: #444; }
.anim svg { width: 16px; height: 16px; }
.btn { height: 22px; padding: 0 11px; border: 1px solid #222; border-radius: 2px; background: linear-gradient(#505050, #434343); white-space: nowrap; }
.btns { height: 24px; gap: 3px; }
.btns .lab { margin-right: 3px; }
.head { height: 18px; }
.rule { flex: 1; height: 2px; background: #1c1c1c; border-bottom: 1px solid #505050; margin-bottom: 2px; }
.oper { height: 24px; }
.oper .dd { margin-right: 3px; }

.sbar { width: 15px; margin-left: 2px; flex: none; display: flex; flex-direction: column; border: 1px solid #1c1c1c; border-bottom: 0; background: #2a2a2a; }
.up { height: 15px; background: #444; position: relative; }
.up::after { content: ""; position: absolute; left: 3px; top: 5px; border: 4px solid transparent; border-bottom: 5px solid #c8c8c8; border-top: 0; }
.thumb { flex: 1; border: 1px solid #161616; background: linear-gradient(90deg, #4c4c4c, #3c3c3c); display: grid; place-items: center; }
.thumb i { width: 9px; height: 18px; background: radial-gradient(circle, #1a1a1a 1px, transparent 1px) 0 0 / 3px 3px; }
.rest { height: 28px; background: repeating-conic-gradient(#222 0 25%, #4a4a4a 0 50%) 0 0 / 2px 2px; }

.taskbar { display: flex; border-top: 1px solid #8c98a0; color: #fff; overflow: hidden;
  background:
    radial-gradient(ellipse 60px 16px at 71% 100%, rgba(100, 130, 160, .35), transparent),
    linear-gradient(180deg, transparent 50%, rgba(60, 78, 98, .7) 70%, rgba(60, 78, 98, .55) 88%, transparent 100%),
    linear-gradient(90deg, #26323e 0, #3f4e5e 9%, #3f4e5e 27%, #141c26 31%, #10171f 72%, #2a3844 74%, #1e2a36 100%); }
.orb { width: 54px; display: grid; place-items: center; flex: none; }
.orb svg { width: 40px; height: 40px; }
.dots { width: 8px; height: 54px; margin: 4px 3px 0; background: radial-gradient(circle, #7c8a98 1px, transparent 1px) 0 0 / 4px 4px; opacity: .7; }
.apps { flex: 1; min-width: 0; padding-left: 5px; display: flex; flex-direction: column; gap: 4px; }
.arow { display: flex; }
.arow button { width: 42px; height: 28px; margin: 0 2px; display: grid; place-items: center; border: 1px solid transparent; border-radius: 3px; flex: none; }
.arow svg { width: 17px; height: 17px; }
.arow .open, .arow .stack { border-color: #98a4ac; background: linear-gradient(160deg, #8a949c, #3c444c 60%, #5c646c); }
.arow .stack { width: 34px; margin: 0 10px 0 2px; box-shadow: 3px 0 0 -1px #4c5862, 4px 0 0 -1px #98a4ac; }
.tray { width: 182px; flex: none; padding-left: 8px; }
.tray div, .sys div { height: 30px; display: flex; align-items: center; }
.tray svg { width: 17px; height: 17px; margin: 0 3px; }
.sys { width: 106px; flex: none; font: 12px/16px "Open Sans", sans-serif; }
.sys .lang { margin-left: 9px; width: 29px; }
.chev { border: 4px solid transparent; border-bottom: 5px solid #fff; border-top: 0; margin-right: 12px; }
.sys svg { width: 16px; height: 16px; margin-right: 9px; }
.sys .vol { margin-left: 59px; }
.clock { width: 84px; flex: none; display: flex; flex-direction: column; align-items: center; font: 12px/20px "Open Sans", sans-serif; }
.show { width: 13px; margin-left: 2px; border-left: 1px solid #6c7884; background: linear-gradient(90deg, #5c6874, #2c3844); flex: none; }
</style>
